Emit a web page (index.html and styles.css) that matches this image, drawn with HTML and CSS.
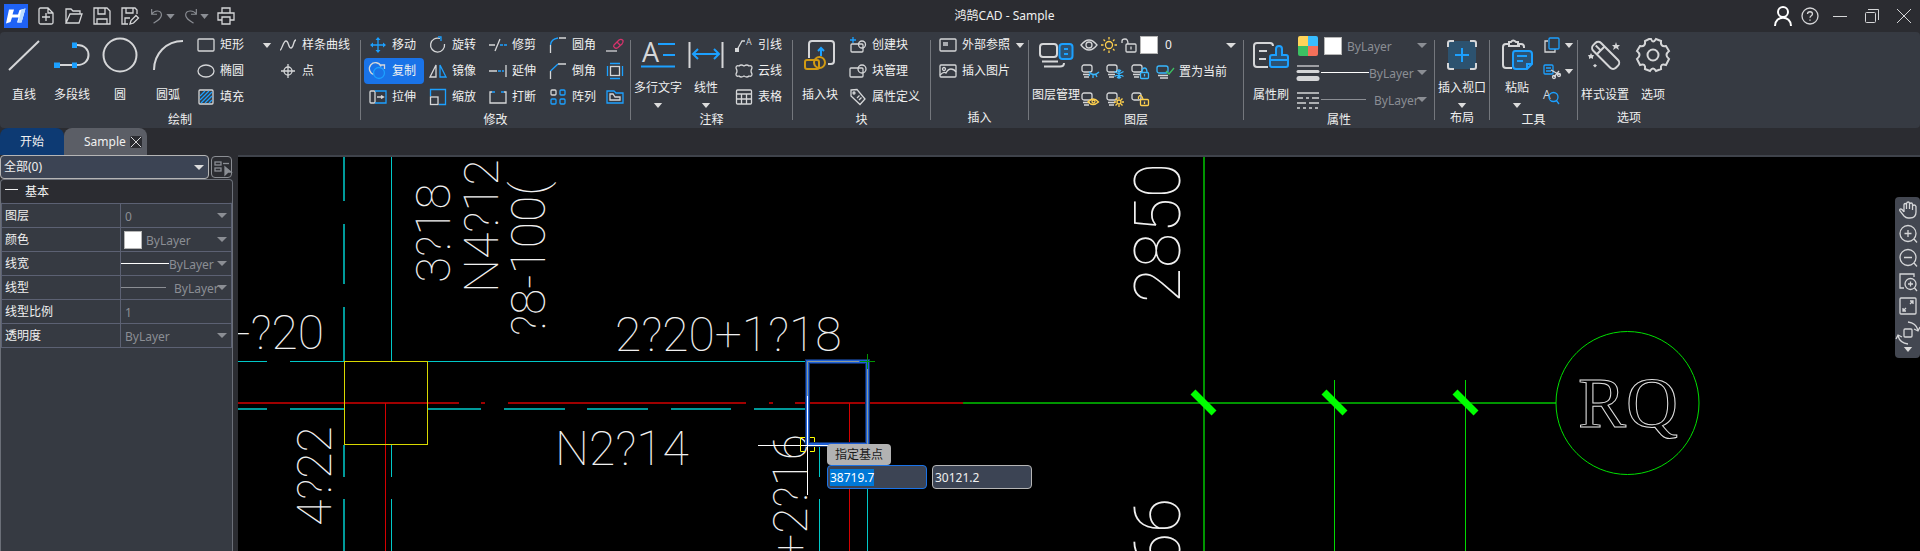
FILE: index.html
```
<!DOCTYPE html>
<html lang="zh-CN">
<head>
  <meta charset="UTF-8">
  <meta name="viewport" content="width=device-width, initial-scale=1.0">
  <title>鸿鹄CAD - Sample</title>
  <link rel="stylesheet" href="styles.css">
</head>
<body>
  <svg class="defs" aria-hidden="true">
    <symbol id="arrow" viewBox="0 0 10 6"><path d="M0 0H10L5 6Z"/></symbol>
    <symbol id="layer" viewBox="0 0 18 18"><rect x="1" y="2" width="10" height="7" rx="2"/><path d="M2 11.5H9M3 14H8"/></symbol>
  </svg>

  <header class="titlebar">
    <div class="quick">
      <svg class="logo" viewBox="0 0 24 24">
        <rect width="24" height="24" fill="#1f62f5"/>
        <path d="M5 5.500H10L8.500 10.500H14L15.500 6L21.500 4.500L17.500 18.500H13L14.500 13.500H8L6.500 18L2 19.500Z" fill="#fff"/>
        <path d="M17.500 5.500L21.500 4.500L17.500 18.500H14Z" fill="#b9dcff"/>
      </svg>
      <button class="tool" title="新建"><svg class="ic" viewBox="0 0 18 18"><path d="M11 1H3.500Q2 1 2 2.500V15.500Q2 17 3.500 17H14.500Q16 17 16 15.500V6ZM11 1V6H16M9 6V14M5 10H13"/></svg></button>
      <button class="tool" title="打开"><svg class="ic" viewBox="0 0 18 18"><path d="M1 16V2H6L8 4H15V7M1 16L5 7H17L14 16Z"/></svg></button>
      <button class="tool" title="保存"><svg class="ic" viewBox="0 0 18 18"><path d="M1 1H14L17 4V17H1ZM5 1V7H12V1M4 17V12H14V17"/></svg></button>
      <button class="tool" title="另存为"><svg class="ic" viewBox="0 0 18 18"><path d="M7 17H1V1H14L16 3V7M5 1V6H12V1M4 17V11H9M9 17L10 13.500L15 8.500L17.500 11L12.500 16Z"/></svg></button>
      <button class="tool undo" title="撤销"><svg class="ic dim" viewBox="0 0 18 18"><path d="M3 1V7H9M3 7C6 2 14 2 14 8C14 12 10 14 5 17"/></svg><svg class="arrow dimfill"><use href="#arrow"/></svg></button>
      <button class="tool undo" title="重做"><svg class="ic dim" viewBox="0 0 18 18"><path d="M15 1V7H9M15 7C12 2 3 2 3 8C3 12 7 14 12 17"/></svg><svg class="arrow dimfill"><use href="#arrow"/></svg></button>
      <button class="tool" title="打印"><svg class="ic" viewBox="0 0 18 18"><path d="M5 6V1H13V6M5 13H1V6H17V13H13M5 10H13V17H5Z"/></svg></button>
    </div>
    <h1 class="title">鸿鹄CAD - Sample</h1>
    <div class="window-btns">
      <button title="用户"><svg class="ic user" viewBox="0 0 18 20"><circle cx="9" cy="6" r="5"/><path d="M1 20C1 9 17 9 17 20"/></svg></button>
      <button title="帮助"><svg class="ic" viewBox="0 0 18 18"><circle cx="9" cy="9" r="8"/><path d="M6.500 7C6.500 4 11.500 4 11.500 7C11.500 8.800 9 8.800 9 10.800M9 12.500V13.800"/></svg></button>
      <button title="最小化"><svg class="ic thin" viewBox="0 0 18 18"><path d="M2 9.500H16"/></svg></button>
      <button title="还原"><svg class="ic thin" viewBox="0 0 18 18"><rect x="2.500" y="5.500" width="10" height="10" rx="1"/><path d="M5 2.500H15.500V13"/></svg></button>
      <button title="关闭"><svg class="ic thin" viewBox="0 0 18 18"><path d="M2 2L16 16M16 2L2 16"/></svg></button>
    </div>
  </header>

  <nav class="ribbon">
    <section class="group">
      <div class="tools">
        <button class="big"><svg class="ic" viewBox="0 0 36 36"><path d="M3 33L33 4"/></svg>直线</button>
        <button class="big"><svg class="ic" viewBox="0 0 36 36"><path d="M3 28H23C31 28 34.500 23 34.500 18S31 8 23 8H20"/><path class="bf" d="M0 25.500H6V31H0ZM18 25.500H23V31H18ZM18 5.500H23V11H18Z"/></svg>多段线</button>
        <button class="big"><svg class="ic" viewBox="0 0 36 36"><circle cx="18" cy="18" r="16.500"/></svg>圆</button>
        <button class="big"><svg class="ic" viewBox="0 0 36 36"><path d="M4 33C4 17 16 4 33 4"/></svg>圆弧</button>
        <div class="col draw">
          <button class="small"><svg class="ic" viewBox="0 0 18 18"><rect x="1" y="3" width="16" height="12" rx="1"/></svg>矩形<svg class="arrow push"><use href="#arrow"/></svg></button>
          <button class="small"><svg class="ic" viewBox="0 0 18 18"><ellipse cx="9" cy="9" rx="8" ry="6"/></svg>椭圆</button>
          <button class="small"><svg class="ic" viewBox="0 0 18 18"><rect x="2" y="2" width="14" height="14" rx="1"/><path class="b" d="M3 8L8 3M3 12L12 3M4 15L15 4M8 15L15 8M12 15L15 12"/></svg>填充</button>
        </div>
        <div class="col">
          <button class="small"><svg class="ic" viewBox="0 0 18 18"><path d="M1 14C3 14 4 5 7 5S9 12 12 12S14 4 17 4"/></svg>样条曲线</button>
          <button class="small"><svg class="ic" viewBox="0 0 18 18"><circle cx="9" cy="9" r="4"/><path d="M9 2V16M2 9H16"/></svg>点</button>
        </div>
      </div>
      <h2>绘制</h2>
    </section>
    <span class="sep"></span>

    <section class="group">
      <div class="tools modify">
        <button class="small"><svg class="ic b" viewBox="0 0 18 18"><path d="M9 2V16M2 9H16"/><path class="bf" d="M9 1L11.500 4H6.500ZM9 17L11.500 14H6.500ZM1 9L4 6.500V11.500ZM17 9L14 6.500V11.500Z"/></svg>移动</button>
        <button class="small"><svg class="ic" viewBox="0 0 18 18"><path d="M11 2.500A7 7 0 1 0 15.500 8"/><path class="b" d="M9 1H12V5"/></svg>旋转</button>
        <button class="small"><svg class="ic" viewBox="0 0 18 18"><path d="M0 9H6M6 15L11 3"/><path class="b" d="M11 9H14M15 9H18"/></svg>修剪</button>
        <button class="small"><svg class="ic" viewBox="0 0 18 18"><path d="M1.500 17V9M10 2H17"/><path class="b" d="M1.500 9Q2 3 9 2"/></svg>圆角</button>
        <button class="small" title="删除"><svg class="ic" viewBox="0 0 18 18"><path d="M0 15H11"/><path class="p" d="M8 9L13 4Q15 2.500 17 4.500Q17.500 6.500 16 8L12 11.500Q10 13 8.500 11.500Q7 10.500 8 9ZM11 6L14.500 9.500"/></svg></button>

        <button class="small active"><svg class="ic" viewBox="0 0 18 18"><path d="M5 12.500A6 6 0 1 1 12 4.500M11 3H15.500V7"/><circle class="b" cx="10" cy="11" r="5.500"/></svg>复制</button>
        <button class="small"><svg class="ic" viewBox="0 0 18 18"><path d="M7 3V15H1Z"/><path class="b" d="M11 3V15H17Z"/></svg>镜像</button>
        <button class="small"><svg class="ic" viewBox="0 0 18 18"><path d="M0 9H8M17 3V15"/><path class="b" d="M9 9H12M13 9H15"/></svg>延伸</button>
        <button class="small"><svg class="ic" viewBox="0 0 18 18"><path d="M1.500 17V9M9 2H17"/><path class="b" d="M1.500 9L9 2"/></svg>倒角</button>
        <button class="small" title="偏移"><svg class="ic" viewBox="0 0 18 18"><rect x="4.500" y="4.500" width="9" height="9"/><path class="b" d="M4 1.500H14M4 16.500H14M1.500 4V14M16.500 4V14"/></svg></button>

        <button class="small"><svg class="ic" viewBox="0 0 18 18"><rect x="1" y="3" width="5" height="12" rx="1"/><path d="M8 9H14M12 7.500L14.500 9L12 10.500"/><path class="b" d="M6 3H17V15H6"/></svg>拉伸</button>
        <button class="small"><svg class="ic" viewBox="0 0 18 18"><path class="b" d="M1.500 8V1.500H16.500V16.500H10"/><rect x="1.500" y="9" width="7.500" height="7.500"/></svg>缩放</button>
        <button class="small"><svg class="ic" viewBox="0 0 18 18"><path d="M3 4H1V15H17V4H15"/><path class="b" d="M3 4H6M12 4H15"/></svg>打断</button>
        <button class="small"><svg class="ic" viewBox="0 0 18 18"><rect x="2" y="2" width="5" height="5" rx="1"/><g class="b"><rect x="11" y="2" width="5" height="5" rx="1"/><rect x="2" y="11" width="5" height="5" rx="1"/><rect x="11" y="11" width="5" height="5" rx="1"/></g></svg>阵列</button>
        <button class="small" title="轮廓"><svg class="ic" viewBox="0 0 18 18"><path class="b" d="M1 15V3H8L10 5H17V15Z"/><path d="M4 12V6H7L9 9H14V12Z"/></svg></button>
      </div>
      <h2>修改</h2>
    </section>
    <span class="sep"></span>

    <section class="group">
      <div class="tools inset">
        <button class="big drop"><svg class="ic" viewBox="0 0 36 36"><text class="glyph" x="2" y="25" font-size="27">A</text><path class="b" d="M18 7H35M23 18H35M1 29.500H35"/></svg>多行文字<svg class="arrow"><use href="#arrow"/></svg></button>
        <button class="big drop"><svg class="ic" viewBox="0 0 36 36"><path d="M1.500 5V31M34.500 5V31"/><path class="b" d="M5 17H31M10 12L5 17L10 22M26 12L31 17L26 22"/></svg>线性<svg class="arrow"><use href="#arrow"/></svg></button>
        <div class="col note">
          <button class="small"><svg class="ic" viewBox="0 0 18 18"><path d="M2 14L7 5H10"/><path class="wf" d="M0 12H4V16H0Z"/><text class="glyph" x="11" y="9" font-size="9">A</text></svg>引线</button>
          <button class="small"><svg class="ic" viewBox="0 0 18 18"><path d="M1 6Q1 3 4 4Q6 2 9 4Q12 2 14 4Q17 3 17 6Q15 9 17 12Q17 15 14 14Q12 16 9 14Q6 16 4 14Q1 15 1 12Q3 9 1 6Z"/></svg>云线</button>
          <button class="small"><svg class="ic" viewBox="0 0 18 18"><rect x="1.500" y="2" width="15" height="14" rx="1"/><path d="M1.500 6H16.500M1.500 11H16.500M6.500 6V16M11.500 6V16"/></svg>表格</button>
        </div>
      </div>
      <h2>注释</h2>
    </section>
    <span class="sep"></span>

    <section class="group">
      <div class="tools inset">
        <button class="big"><svg class="ic" viewBox="0 0 36 36"><path d="M7 21V7Q7 4 10 4H29Q32 4 32 7V24Q32 27 29 27H26"/><path class="b" d="M19 19V11M16 14L19 11L22 14"/><g class="o"><rect x="3" y="23" width="14" height="9" rx="2"/><circle cx="17.500" cy="25.500" r="5.500"/></g></svg>插入块</button>
        <div class="col block">
          <button class="small"><svg class="ic" viewBox="0 0 18 18"><rect x="2" y="8" width="12" height="8" rx="1"/><circle cx="13" cy="8.500" r="3.500"/><path class="b" d="M4 1V7M1 4H7"/></svg>创建块</button>
          <button class="small"><svg class="ic" viewBox="0 0 18 18"><rect x="1" y="6" width="13" height="9" rx="1"/><circle cx="13" cy="7" r="4"/></svg>块管理</button>
          <button class="small"><svg class="ic" viewBox="0 0 18 18"><path d="M2 2L8 1.500L16 11L11 16.500L2 8Z"/><circle cx="5" cy="5" r="1"/><path d="M8 10L10.500 7.500M10 12L12.500 9.500"/></svg>属性定义</button>
        </div>
      </div>
      <h2>块</h2>
    </section>
    <span class="sep"></span>

    <section class="group">
      <div class="tools inset">
        <div class="col">
          <button class="small"><svg class="ic" viewBox="0 0 18 18"><rect x="1" y="3" width="16" height="12" rx="1"/><path d="M4 6H9V10H4Z" fill="#a8abb0" stroke="none"/></svg>外部参照<svg class="arrow push"><use href="#arrow"/></svg></button>
          <button class="small"><svg class="ic" viewBox="0 0 18 18"><rect x="1" y="3" width="16" height="12" rx="1"/><circle cx="5" cy="7" r="1.500"/><path d="M1 13Q5 9 7 11Q9 7 12 7Q15 7 17 10"/></svg>插入图片</button>
        </div>
      </div>
      <h2>插入</h2>
    </section>
    <span class="sep"></span>

    <section class="group">
      <div class="tools inset">
        <button class="big"><svg class="ic" viewBox="0 0 36 36"><rect x="2" y="7" width="17" height="13" rx="3"/><rect class="b tint" x="21.500" y="7" width="13" height="15" rx="3"/><path class="b" d="M26 12H30M26 17H30"/><path d="M4 24.500H20M6 29.500H22Q26 29.500 26 26"/></svg>图层管理</button>
        <div class="col layers">
          <div class="line">
            <button class="mini" title="显示"><svg class="ic" viewBox="0 0 18 18"><path d="M1 9Q9-1 17 9Q9 19 1 9Z"/><circle cx="9" cy="9" r="3"/></svg></button>
            <button class="mini" title="冻结"><svg class="ic y" viewBox="0 0 18 18"><circle cx="9" cy="9" r="3.500"/><path d="M9 1V3.500M9 14.500V17M1 9H3.500M14.500 9H17M3.500 3.500L5 5M13 13L14.500 14.500M14.500 3.500L13 5M5 13L3.500 14.500"/></svg></button>
            <button class="mini" title="锁定"><svg class="ic" viewBox="0 0 18 18"><rect x="6" y="8" width="10" height="8" rx="1"/><path d="M2 7V5Q2 3 5 3Q8 3 8 8M11 10.500V13.500"/></svg></button>
            <span class="swatch"></span>
            <select class="combo" aria-label="当前图层"><option>0</option></select>
          </div>
          <div class="line wide">
            <button class="mini" title="关闭图层"><svg class="ic" viewBox="0 0 18 18"><use href="#layer"/><path class="c" d="M8 9Q13 14 18 9M9 11L8 13M12 12V15M15 12L16 14"/></svg></button>
            <button class="mini" title="冻结图层"><svg class="ic" viewBox="0 0 18 18"><use href="#layer"/><path class="c" d="M13 6V16M8.500 8.500L17.500 13.500M17.500 8.500L8.500 13.500M11 7L13 9L15 7M11 15L13 13L15 15"/></svg></button>
            <button class="mini" title="锁定图层"><svg class="ic" viewBox="0 0 18 18"><use href="#layer"/><rect class="c" x="9.500" y="9.500" width="8" height="6" rx="1"/><path class="c" d="M11 9.500Q11 5 13.500 5T16 9.500M13.500 11V13.500"/></svg></button>
            <button class="mini text"><svg class="ic" viewBox="0 0 18 18"><rect class="c" x="1" y="3" width="11" height="7" rx="2"/><path d="M2 12.500H12M4 15H12"/><path class="g" d="M10 8L13 11L18 5"/></svg>置为当前</button>
          </div>
          <div class="line wide">
            <button class="mini" title="打开图层"><svg class="ic" viewBox="0 0 18 18"><use href="#layer"/><path class="y" d="M7 11Q12 5 17.500 11Q12 16 7 11Z"/><circle class="y" cx="12.500" cy="10.500" r="1.500"/></svg></button>
            <button class="mini" title="解冻图层"><svg class="ic" viewBox="0 0 18 18"><use href="#layer"/><circle class="y" cx="13" cy="11" r="2"/><path class="y" d="M13 6V8M13 14V16M8 11H10M16 11H18M9.500 7.500L11 9M15 13L16.500 14.500M16.500 7.500L15 9M11 13L9.500 14.500"/></svg></button>
            <button class="mini" title="解锁图层"><svg class="ic" viewBox="0 0 18 18"><rect x="1" y="2" width="9" height="7" rx="2"/><rect class="y" x="9.500" y="8.500" width="8" height="6" rx="1"/><path class="y" d="M7.500 8V6Q10 2 12 8M13.500 10.500V13"/></svg></button>
          </div>
        </div>
      </div>
      <h2>图层</h2>
    </section>
    <span class="sep"></span>

    <section class="group">
      <div class="tools inset">
        <button class="big"><svg class="ic" viewBox="0 0 36 36"><path d="M15 30H4Q1 30 1 27V9Q1 6 4 6H17Q20 6 20 9M6 14H14M6 22H13"/><path class="b tint" d="M17 20Q17 18 19 18H23V12Q23 9 26 9T29 12V18H33Q35 18 35 20V28Q35 30 33 30H19Q17 30 17 28ZM17 23H35"/></svg>属性刷</button>
        <div class="col props">
          <div class="line">
            <svg class="ic pic" viewBox="0 0 24 20"><g stroke="none"><path d="M2 10V2Q2 0 4 0H12V10Z" fill="#ffd45a"/><path d="M12 0H20Q22 0 22 2V10H12Z" fill="#38bdff"/><path d="M2 10H12V20H4Q2 20 2 18Z" fill="#3cc063"/><path d="M12 10H22V18Q22 20 20 20H12Z" fill="#f4705a"/></g></svg>
            <span class="swatch"></span>
            <select class="combo muted" aria-label="颜色"><option>ByLayer</option></select>
          </div>
          <div class="line">
            <svg class="ic pic" viewBox="0 0 24 20"><path d="M1 3H23"/><path d="M2 8.500H22" stroke-width="3" stroke-linecap="round"/><path d="M3 15.500H21" stroke-width="5" stroke-linecap="round"/></svg>
            <span class="sample"></span>
            <select class="combo muted" aria-label="线宽"><option>ByLayer</option></select>
          </div>
          <div class="line">
            <svg class="ic pic" viewBox="0 0 24 20"><path d="M1 3H23M1 8H7M10 8H13M16 8H23M1 13H10M13 13H23M1 18H4M7 18H10M13 18H16M19 18H22"/></svg>
            <span class="sample type"></span>
            <select class="combo muted" aria-label="线型"><option>ByLayer</option></select>
          </div>
        </div>
      </div>
      <h2>属性</h2>
    </section>
    <span class="sep"></span>

    <section class="group">
      <div class="tools inset">
        <button class="big drop"><svg class="ic" viewBox="0 0 36 36"><rect x="4" y="4" width="28" height="28" rx="3" fill="#2c526f" stroke="none"/><path class="b" d="M18 11V25M11 18H25"/><path d="M4 10V6Q4 4 6 4H10M26 4H30Q32 4 32 6V10M32 26V30Q32 32 30 32H26M10 32H6Q4 32 4 30V26"/></svg>插入视口<svg class="arrow"><use href="#arrow"/></svg></button>
      </div>
      <h2>布局</h2>
    </section>
    <span class="sep"></span>

    <section class="group">
      <div class="tools inset">
        <button class="big drop"><svg class="ic" viewBox="0 0 36 36"><path d="M13 31H7Q4 31 4 28V10Q4 7 7 7H10V9H20V7H22Q25 7 25 10V11M10 8V5H12Q14 2 17 5H19V8"/><path class="b tint" d="M16 14H30Q33 14 33 17V27L28 32H17Q14 32 14 29V17Q14 14 16 14ZM28 32V27H33M18 19H28M18 24H24"/></svg>粘贴<svg class="arrow"><use href="#arrow"/></svg></button>
        <div class="col clip">
          <button class="small" title="复制到剪贴板"><svg class="ic" viewBox="0 0 18 18"><path d="M5 5H2V16H12V13"/><rect class="b" x="6" y="2" width="10" height="11" rx="1"/></svg><svg class="arrow push"><use href="#arrow"/></svg></button>
          <button class="small" title="剪切"><svg class="ic" viewBox="0 0 18 18"><rect class="b" x="1" y="3" width="9" height="9" rx="1"/><path class="b" d="M3 6H8M3 9H8"/><path d="M8 8L17 13M11 15L16 9"/><circle cx="11" cy="15" r="1.500"/><circle cx="16" cy="13" r="1.500"/></svg><svg class="arrow push"><use href="#arrow"/></svg></button>
          <button class="small" title="查找"><svg class="ic" viewBox="0 0 18 18"><text class="glyph" x="0" y="11" font-size="12">A</text><circle class="b" cx="10.500" cy="9" r="4.500"/><path class="b" d="M13 12L16 16"/></svg></button>
        </div>
      </div>
      <h2>工具</h2>
    </section>
    <span class="sep"></span>

    <section class="group">
      <div class="tools inset">
        <button class="big"><svg class="ic" viewBox="0 0 36 36"><g transform="rotate(45 19 18)"><rect x="3" y="13" width="32" height="11" rx="4"/><path d="M12 13V24M5 18.500H12"/></g><path class="wf" d="M29 5L30 8L33 8L31 10L32 13L29 11L26 13L27 10L25 8L28 8ZM4 16L5 18L7 18L6 20L6 22L4 21L2 22L2 20L1 18L3 18ZM8 27L10 28.500L8 30.500L6 28.500Z"/></svg>样式设置</button>
        <button class="big"><svg class="ic" viewBox="0 0 36 36"><circle cx="18" cy="18" r="5.500"/><path d="M14 2H16Q18 7 21 2L26 4Q25 10 31 9L34 14Q29 18 34 22L31 28Q25 26 26 32L21 34Q18 29 15 34L10 32Q11 26 5 28L2 22Q7 18 2 14L5 9Q11 10 10 4Z"/></svg>选项</button>
      </div>
      <h2>选项</h2>
    </section>
  </nav>

  <div class="tabs">
    <button class="tab home">开始</button>
    <div class="tab file"><a href="#sample">Sample</a><button class="close" title="关闭"><svg class="ic thin" viewBox="0 0 12 12"><path d="M1 1L11 11M11 1L1 11"/></svg></button></div>
  </div>

  <main class="workspace">
    <aside class="panel">
      <div class="filter">
        <select class="combo" aria-label="选择集"><option>全部(0)</option></select>
        <button title="快速选择"><svg class="ic dim" viewBox="0 0 18 18"><rect x="2" y="4" width="6" height="3"/><rect x="2" y="10" width="6" height="3"/><path d="M10 5.500H16"/><path d="M12 9L18 14H15L12 17Z" fill="#8b8e94"/></svg></button>
      </div>
      <div class="sheet">
        <button class="section"><span class="minus"></span>基本</button>
        <table>
          <tr><th scope="row"><label for="p-layer">图层</label></th><td><select id="p-layer" class="combo muted"><option>0</option></select></td></tr>
          <tr><th scope="row"><label for="p-color">颜色</label></th><td><div class="value"><span class="swatch"></span><select id="p-color" class="combo muted"><option>ByLayer</option></select></div></td></tr>
          <tr><th scope="row"><label for="p-width">线宽</label></th><td><div class="value"><span class="sample"></span><select id="p-width" class="combo muted"><option>ByLayer</option></select></div></td></tr>
          <tr><th scope="row"><label for="p-type">线型</label></th><td><div class="value"><span class="sample type"></span><select id="p-type" class="combo muted"><option>ByLayer</option></select></div></td></tr>
          <tr><th scope="row"><label for="p-scale">线型比例</label></th><td><input id="p-scale" type="text" value="1"></td></tr>
          <tr><th scope="row"><label for="p-alpha">透明度</label></th><td><select id="p-alpha" class="combo muted"><option>ByLayer</option></select></td></tr>
        </table>
      </div>
    </aside>

    <div class="canvas" id="sample">
      <svg class="drawing">
        <g transform="translate(-238 -157)">
          <!-- beams -->
          <path class="cyan2" d="M344 157V201M344 224V284M344 307V361M344 445V477M344 499V551M238 409H267M290 409H344M428 409H481M504 409H565M587 409H648M671 409H731M754 409H807"/>
          <path class="cyan1" d="M391.500 157V361M391.500 445V477M391.500 499V551M238 361.500H267M290 361.500H344M428 361.500H808M819.500 447V477M819.500 499V551M867.500 444V551"/>
          <path class="red2" d="M238 403H459M481 403H485M508 403H746M769 403H773M795 403H963"/>
          <path class="red1" d="M385.500 403V551M849.500 403V551"/>
          <rect class="column" x="344.500" y="361.500" width="83" height="83"/>

          <!-- axes -->
          <path class="green2" d="M963 403H1556M1204 157V551"/>
          <path class="green1" d="M1334.500 380V551M1465.500 380V551"/>
          <path class="tick" d="M1193 392L1214 413M1324 392L1345 413M1455 392L1476 413"/>
          <circle class="bubble" cx="1627.500" cy="403" r="71.500"/>
          <text class="axis" x="1628" y="427">RQ</text>

          <g class="dim-text">
            <text class="end" x="324" y="349">-?20</text>
            <text x="615" y="351">2?20+1?18</text>
            <text x="555" y="465">N2?14</text>
            <text transform="translate(450 283) rotate(-90)">3?18</text>
            <text transform="translate(498 293) rotate(-90)">N4?12</text>
            <text transform="translate(545 336) rotate(-90)">?8-100(</text>
            <text transform="translate(331 526) rotate(-90)">4?22</text>
            <text class="end" transform="translate(807 434) rotate(-90)">+2?16</text>
            <text class="large" transform="translate(1180 303) rotate(-90)">2850</text>
            <text class="large end" transform="translate(1180 498) rotate(-90)">66</text>
          </g>

          <!-- highlighted column and cursor -->
          <rect class="glow" x="807.500" y="361.500" width="60" height="83"/>
          <rect class="hover" x="807.500" y="361.500" width="60" height="83"/>
          <path class="edge" d="M807.500 396V361.500H859M867.500 369V444"/>
          <path class="green1 snap" d="M860 361.500H875M867.500 354V369"/>
          <path class="cursor" d="M758 445.500H828M807.500 396V495"/>
          <path class="pickbox" d="M805 437.500H800.500V451.500H805M810 437.500H814.500V442M814.500 447V451.500H810"/>
        </g>
      </svg>

      <div class="prompt">
        <span class="tip">指定基点</span>
        <div class="coords">
          <input id="coord-x" type="text" value="38719.7" aria-label="X">
          <input id="coord-y" type="text" value="30121.2" aria-label="Y">
        </div>
      </div>

      <div class="viewbar">
        <button title="平移"><svg class="ic" viewBox="0 0 18 18"><path d="M5 11V4Q5 2.500 6.200 2.500T7.500 4V8M7.500 8V2.500Q8 1 9.200 1T10.500 2.500V8M10.500 8V3Q11 2 12.200 2T13.500 3.500V9M13.500 9V5Q14 4 15.200 4T17 5.500V11Q17 17 11 17H9Q7 17 5 15L1 10Q0 8 2 8Q3 8 5 11"/></svg></button>
        <button title="放大"><svg class="ic" viewBox="0 0 18 18"><circle cx="9" cy="8.500" r="8"/><path d="M9 5V12M5.500 8.500H12.500M15 14L18 17.500"/></svg></button>
        <button title="缩小"><svg class="ic" viewBox="0 0 18 18"><circle cx="9" cy="8.500" r="8"/><path d="M5 8.500H13M15 14L18 17.500"/></svg></button>
        <button title="窗口缩放"><svg class="ic" viewBox="0 0 18 18"><path d="M5 15H1V1H15V4"/><circle cx="11.500" cy="11" r="5.500"/><path d="M11.500 8.500V13.500M9 11H14M15.500 15L18 18"/></svg></button>
        <button title="全图"><svg class="ic" viewBox="0 0 18 18"><rect x="1" y="1" width="16" height="16" rx="1"/><path d="M11 7L14 4M11 4H14V7M7 11L4 14M4 11V14H7"/></svg></button>
        <button class="orbit" title="旋转视图"><svg class="ic" viewBox="0 0 24 24"><rect x="8" y="8" width="8" height="8" rx="1"/><path d="M12 1Q20 2 22 9M18 8L22 10L24 6M12 23Q4 22 2 15M0 18L2 14L6 16"/></svg><svg class="arrow"><use href="#arrow"/></svg></button>
      </div>
    </div>
  </main>

  <script>
    const coordX = document.getElementById("coord-x");
    coordX.focus();
    coordX.select();
  </script>
</body>
</html>
```
FILE: styles.css
```
* {
  box-sizing: border-box;
}

body {
  margin: 0;
  height: 100vh;
  display: flex;
  flex-direction: column;
  overflow: hidden;
  background: #2b2c31;
  color: #f0f0f0;
  font-family: "Noto Sans", "Noto Sans CJK SC", sans-serif;
  font-size: 12px;
  line-height: 18px;
}

button, select, input {
  font: inherit;
  color: inherit;
  background: none;
  border: none;
  margin: 0;
  padding: 0;
}

button {
  display: flex;
  align-items: center;
  white-space: nowrap;
  cursor: pointer;
}

h1, h2 {
  margin: 0;
  font-size: 12px;
  font-weight: normal;
  text-align: center;
}

/* icons */
.defs {
  display: none;
}

.ic {
  width: 18px;
  height: 18px;
  flex: none;
  display: block;
  fill: none;
  stroke: #d5d6d8;
  stroke-width: 1.3;
  overflow: visible;
}

.ic.thin { stroke-width: 1; }
.ic.dim { stroke: #8b8e94; }
.ic .b, .ic.b { stroke: #1ca0ff; }
.ic .c { stroke: #38b8ff; }
.ic .y, .ic.y { stroke: #ffd04d; }
.ic .o { stroke: #d19a13; }
.ic .g { stroke: #3cc063; }
.ic .p { stroke: #d6336c; }
.ic .tint { fill: #2c5273; }
.ic .bf { fill: #1ca0ff; stroke: none; }
.ic .wf { fill: #d5d6d8; stroke: none; }
.ic .glyph { fill: #d5d6d8; stroke: none; font-family: "Open Sans", sans-serif; }

.arrow {
  width: 10px;
  height: 5px;
  flex: none;
  fill: #dcdcdc;
}

.arrow.push { margin-left: auto; }
.dimfill { fill: #8b8e94; }

/* title bar */
.titlebar {
  display: flex;
  align-items: center;
  height: 32px;
  flex: none;
}

.quick {
  display: flex;
  align-items: center;
  gap: 10px;
  padding-left: 4px;
}

.logo {
  width: 24px;
  height: 24px;
  margin-right: -1px;
}

.undo {
  gap: 1px;
  margin-right: -2px;
}

.undo .ic {
  width: 16px;
}

.undo .arrow {
  width: 9px;
}

.title {
  flex: 1;
}

.window-btns {
  display: flex;
  align-items: center;
  gap: 14px;
  padding-right: 7px;
}

.window-btns .user {
  height: 20px;
  stroke: #fff;
  stroke-width: 2;
}

.window-btns button:first-child {
  margin-right: -5px;
}

.window-btns button:nth-child(2) {
  margin-right: -2px;
}

/* ribbon */
.ribbon {
  display: flex;
  flex: none;
  height: 96px;
  background: #363a42;
  border-radius: 4px;
}

.sep {
  width: 1px;
  margin: 8px 0;
  background: #74777d;
}

.group {
  display: flex;
  flex-direction: column;
}

.group h2 {
  line-height: 20px;
}

.tools {
  display: flex;
  height: 78px;
}

.tools.inset {
  padding: 0 3px;
}

.big {
  width: 48px;
  flex-direction: column;
  gap: 13px;
  padding-top: 5px;
}

.big.drop {
  gap: 6px;
}

.big .ic {
  width: 36px;
  height: 36px;
  stroke-width: 2;
}

.small {
  height: 26px;
  width: 100%;
  padding-left: 5px;
  gap: 5px;
}

.small.active {
  background: #1a73e8;
  border-radius: 4px;
}

.col {
  min-width: 86px;
}

.col.draw {
  width: 82px;
  min-width: 82px;
  padding-right: 2px;
}

.col.note { min-width: 59px; }
.col.block { min-width: 83px; }
.tools.inset > .col:only-child { min-width: 91px; }

.tools.modify {
  display: grid;
  grid-template-columns: repeat(4, 60px) 26px;
  grid-template-rows: repeat(3, 26px);
  padding-left: 3px;
}

.modify .small:nth-child(5n) {
  padding-left: 2px;
}

.layers {
  width: 160px;
}

.line {
  display: flex;
  align-items: center;
  height: 26px;
}

.layers .line {
  gap: 2px;
}

.layers .line.wide {
  height: 28px;
  gap: 7px;
  padding-left: 1px;
}

.layers .combo, .props .combo {
  background-position-x: right 1px;
}

.mini.text {
  gap: 5px;
}

.swatch {
  width: 18px;
  height: 18px;
  flex: none;
  background: #fff;
  border: 1px solid #b5b5b5;
}

.combo {
  appearance: none;
  flex: 1;
  min-width: 0;
  height: 24px;
  padding: 0 14px 0 5px;
  background: url("data:image/svg+xml,%3Csvg xmlns='http://www.w3.org/2000/svg' viewBox='0 0 10 5'%3E%3Cpath d='M0 0H10L5 5Z' fill='%23dcdcdc'/%3E%3C/svg%3E") no-repeat right 4px center / 10px 5px;
}

.combo.muted {
  padding-top: 2px;
  color: #8b8e94;
  background-image: url("data:image/svg+xml,%3Csvg xmlns='http://www.w3.org/2000/svg' viewBox='0 0 10 5'%3E%3Cpath d='M0 0H10L5 5Z' fill='%238b8e94'/%3E%3C/svg%3E");
}

.props {
  width: 136px;
  padding-left: 1px;
}

.props .line {
  height: 27px;
}

.props .pic {
  width: 24px;
  height: 20px;
  margin-right: 1px;
}

.props .swatch {
  margin-left: 3px;
}

.sample {
  width: 48px;
  height: 1px;
  flex: none;
  background: #fff;
}

.sample.type {
  width: 45px;
  margin-right: 8px;
  background: #8b8e94;
}

.sample + .combo {
  padding-left: 0;
  padding-right: 0;
}

.col.clip {
  width: 33px;
  min-width: 33px;
}

.clip .small {
  padding-left: 2px;
  gap: 0;
}

/* document tabs */
.tabs {
  display: flex;
  height: 27px;
  flex: none;
}

.tab {
  display: flex;
  align-items: center;
  justify-content: center;
  border-radius: 8px 8px 0 0;
}

.tab.home {
  width: 64px;
  background: #0d3a73;
}

.tab.file {
  gap: 4px;
  padding: 0 5px 0 20px;
  background: #5b5e66;
}

.tab a {
  color: inherit;
  text-decoration: none;
}

.close {
  background: #2b2c31;
  border-radius: 2px;
}

.close .ic {
  width: 12px;
  height: 12px;
}

/* property panel */
.workspace {
  flex: 1;
  display: flex;
  min-height: 0;
}

.panel {
  width: 233px;
  margin-right: 5px;
  flex: none;
  display: flex;
  flex-direction: column;
}

.filter {
  display: flex;
  gap: 2px;
  height: 24px;
  padding-right: 1px;
}

.filter .combo {
  padding-left: 3px;
  border: 1px solid #b5b5b5;
  border-radius: 4px;
  background-color: #3c4454;
  background-position-x: right 3px;
}

.filter button {
  width: 21px;
  height: 22px;
  align-self: center;
  justify-content: center;
  border: 1px solid #8b8e94;
  border-radius: 4px;
}

.sheet {
  flex: 1;
  border: 1px solid #6b6f78;
  border-radius: 4px 4px 0 0;
  border-bottom: none;
  background: #363a42;
}

.section {
  width: 100%;
  height: 23px;
  gap: 7px;
  padding-left: 4px;
  background: #2b2c31;
  border-radius: 4px;
}

.minus {
  width: 13px;
  height: 1px;
  margin-bottom: 4px;
  background: #f0f0f0;
}

table {
  width: 100%;
  border-collapse: collapse;
  table-layout: fixed;
}

th, td {
  height: 24px;
  padding: 0;
  border: 1px solid #5c6173;
}

th {
  width: 119px;
  padding-left: 3px;
  font-weight: normal;
  text-align: left;
}

td .combo, td input {
  display: block;
  width: 100%;
  height: 23px;
  padding-left: 4px;
}

td input {
  padding-top: 2px;
  color: #8b8e94;
}

.value {
  display: flex;
  align-items: center;
}

.value .swatch {
  margin-left: 3px;
}

.value .sample + .combo {
  padding: 2px 0 0;
}

/* drawing area */
.canvas {
  position: relative;
  flex: 1;
  min-width: 0;
  background: #000;
  border-top: 2px solid #3f434b;
}

.drawing {
  display: block;
  width: 100%;
  height: 100%;
  fill: none;
}

.cyan1 { stroke: #00c8c8; }
.cyan2 { stroke: #009a9a; stroke-width: 2; }
.red1 { stroke: #d40000; }
.red2 { stroke: #a00000; stroke-width: 2; }
.green1 { stroke: #00d800; }
.green2 { stroke: #009400; stroke-width: 2; }
.column { stroke: #d8d800; }
.bubble { stroke: #00e000; }
.tick { stroke: #00ff00; stroke-width: 7; }
.glow { stroke: #102f68; stroke-width: 5; }
.hover { stroke: #1f60d6; stroke-width: 3; }
.edge { stroke: #8c9a96; }
.snap { stroke: #009400; }
.cursor { stroke: #fff; }
.pickbox { stroke: #ffff00; }

.dim-text text {
  fill: #f0f0f0;
  font-family: Roboto, sans-serif;
  font-weight: 100;
  font-size: 48px;
}

.dim-text .large {
  font-size: 64px;
}

.dim-text .end {
  text-anchor: end;
}

.axis {
  fill: none;
  stroke: #e0e0e0;
  stroke-width: 1;
  font-family: "Liberation Serif", serif;
  font-size: 72px;
  text-anchor: middle;
}

/* dynamic input next to the cursor */
.prompt {
  position: absolute;
  left: 589px;
  top: 287px;
}

.tip {
  display: inline-block;
  height: 21px;
  padding: 2px 8px;
  background: #b2b2b2;
  color: #1a1a1a;
  border-radius: 4px;
  vertical-align: top;
}

.coords {
  display: flex;
  gap: 5px;
}

.coords input {
  width: 100px;
  height: 24px;
  padding: 0 2px;
  background: #3c4454;
  border: 1px solid #b5b5b5;
  border-radius: 4px;
}

.coords input:focus {
  outline: none;
  border-color: #1a73e8;
}

.coords input::selection {
  background: #0078d7;
  color: #fff;
}

.viewbar {
  position: absolute;
  right: 0;
  top: 40px;
  width: 25px;
  display: flex;
  flex-direction: column;
  align-items: center;
  gap: 6px;
  padding: 4px 0 6px;
  background: #434751;
  border-radius: 4px;
}

.orbit {
  flex-direction: column;
  gap: 2px;
}

.orbit .ic {
  width: 24px;
  height: 24px;
}
```
